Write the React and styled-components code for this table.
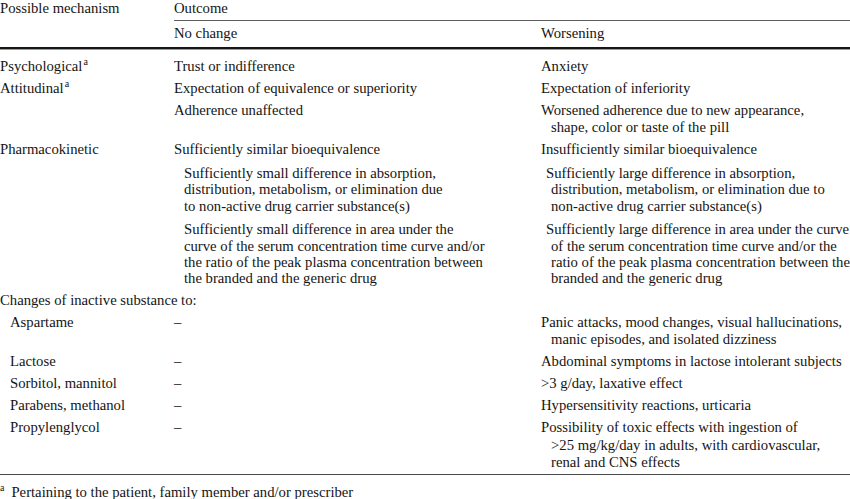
import React from "react";
import styled, { createGlobalStyle } from "styled-components";

const PageStyle = createGlobalStyle`
  html, body {
    margin: 0;
    padding: 0;
    background: #ffffff;
  }
  body {
    font-family: "Liberation Serif", "Times New Roman", serif;
    font-size: 14.7px;
    color: #141414;
    overflow: hidden;
  }
`;

const Table = styled.div`
  width: 850px;
  line-height: 17.5px;
`;

const Head = styled.div`
  display: grid;
  grid-template-columns: 174px 367px 1fr;
  border-bottom: 2px solid #151515;
  box-shadow: 0 1px 0 #9a9a9a;
`;

const HeadCell = styled.div`
  grid-column: ${(p) => p.$span || "auto"};
  line-height: ${(p) => (p.$top ? "16.5px" : "17.5px")};
  padding: ${(p) => (p.$top ? "0 0 3.5px" : "4px 0 4.8px")};
  border-bottom: ${(p) => (p.$rule ? "1.5px solid #5e5e5e" : "none")};
  white-space: nowrap;
`;

const Body = styled.div`
  padding-top: 6.4px;
  border-bottom: 1.5px solid #4a4a4a;
`;

const Row = styled.div`
  display: grid;
  grid-template-columns: 174px 367px 1fr;
  padding: ${(p) => (p.$tight ? "4px 0 3.5px" : "2.25px 0")};
  line-height: ${(p) => (p.$tight ? "16.2px" : "17.5px")};
`;

const Cell = styled.div`
  white-space: nowrap;
  padding-left: ${(p) => p.$indent || 0}px;
  text-indent: ${(p) => p.$lead || 0}px;
`;

const Sup = styled.sup`
  font-size: 10px;
  line-height: 0;
  vertical-align: 6px;
  margin-left: 1px;
`;

const Footnote = styled.p`
  margin: 0;
  padding-top: 8.5px;
  white-space: nowrap;
  line-height: 17.5px;

  sup {
    font-size: 10px;
    vertical-align: 6px;
    line-height: 0;
    margin-right: 7px;
  }
`;

export default function App() {
  return (
    <>
      <PageStyle />
      <Table>
        <Head>
          <HeadCell $top>Possible mechanism</HeadCell>
          <HeadCell $top $rule $span="2 / 4">
            Outcome
          </HeadCell>
          <HeadCell />
          <HeadCell>No change</HeadCell>
          <HeadCell>Worsening</HeadCell>
        </Head>

        <Body>
          <Row>
            <Cell>
              Psychological<Sup>a</Sup>
            </Cell>
            <Cell>Trust or indifference</Cell>
            <Cell>Anxiety</Cell>
          </Row>
          <Row>
            <Cell>
              Attitudinal<Sup>a</Sup>
            </Cell>
            <Cell>Expectation of equivalence or superiority</Cell>
            <Cell>Expectation of inferiority</Cell>
          </Row>
          <Row>
            <Cell />
            <Cell>Adherence unaffected</Cell>
            <Cell $indent={10} $lead={-10}>
              Worsened adherence due to new appearance,
              <br />
              shape, color or taste of the pill
            </Cell>
          </Row>
          <Row>
            <Cell>Pharmacokinetic</Cell>
            <Cell>Sufficiently similar bioequivalence</Cell>
            <Cell>Insufficiently similar bioequivalence</Cell>
          </Row>
          <Row $tight>
            <Cell />
            <Cell $indent={10}>
              Sufficiently small difference in absorption,
              <br />
              distribution, metabolism, or elimination due
              <br />
              to non-active drug carrier substance(s)
            </Cell>
            <Cell $indent={10} $lead={-5}>
              Sufficiently large difference in absorption,
              <br />
              distribution, metabolism, or elimination due to
              <br />
              non-active drug carrier substance(s)
            </Cell>
          </Row>
          <Row $tight>
            <Cell />
            <Cell $indent={10}>
              Sufficiently small difference in area under the
              <br />
              curve of the serum concentration time curve and/or
              <br />
              the ratio of the peak plasma concentration between
              <br />
              the branded and the generic drug
            </Cell>
            <Cell $indent={10} $lead={-5}>
              Sufficiently large difference in area under the curve
              <br />
              of the serum concentration time curve and/or the
              <br />
              ratio of the peak plasma concentration between the
              <br />
              branded and the generic drug
            </Cell>
          </Row>
          <Row>
            <Cell>Changes of inactive substance to:</Cell>
            <Cell />
            <Cell />
          </Row>
          <Row>
            <Cell $indent={10}>Aspartame</Cell>
            <Cell>–</Cell>
            <Cell $indent={10} $lead={-10}>
              Panic attacks, mood changes, visual hallucinations,
              <br />
              manic episodes, and isolated dizziness
            </Cell>
          </Row>
          <Row>
            <Cell $indent={10}>Lactose</Cell>
            <Cell>–</Cell>
            <Cell>Abdominal symptoms in lactose intolerant subjects</Cell>
          </Row>
          <Row>
            <Cell $indent={10}>Sorbitol, mannitol</Cell>
            <Cell>–</Cell>
            <Cell>&gt;3 g/day, laxative effect</Cell>
          </Row>
          <Row>
            <Cell $indent={10}>Parabens, methanol</Cell>
            <Cell>–</Cell>
            <Cell>Hypersensitivity reactions, urticaria</Cell>
          </Row>
          <Row>
            <Cell $indent={10}>Propylenglycol</Cell>
            <Cell>–</Cell>
            <Cell $indent={10} $lead={-10}>
              Possibility of toxic effects with ingestion of
              <br />
              &gt;25 mg/kg/day in adults, with cardiovascular,
              <br />
              renal and CNS effects
            </Cell>
          </Row>
        </Body>

        <Footnote>
          <sup>a</sup>
          Pertaining to the patient, family member and/or prescriber
        </Footnote>
      </Table>
    </>
  );
}
